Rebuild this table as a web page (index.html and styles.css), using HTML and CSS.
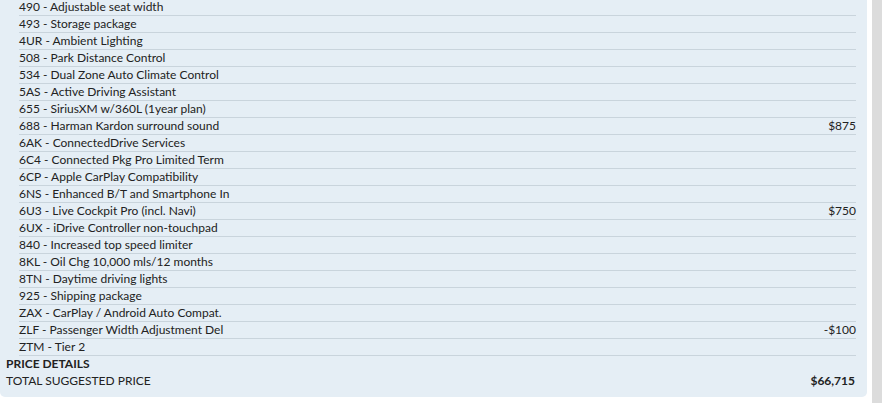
FILE: index.html
```html
<!DOCTYPE html>
<html lang="en">
<head>
    <meta charset="UTF-8">
    <title>Price details</title>
    <link rel="stylesheet" href="styles.css">
</head>
<body>

<div class="page">
    <div class="panel">
        <ul class="options">
            <li><span>490 - Adjustable seat width</span><span></span></li>
            <li><span>493 - Storage package</span><span></span></li>
            <li><span>4UR - Ambient Lighting</span><span></span></li>
            <li><span>508 - Park Distance Control</span><span></span></li>
            <li><span>534 - Dual Zone Auto Climate Control</span><span></span></li>
            <li><span>5AS - Active Driving Assistant</span><span></span></li>
            <li><span>655 - SiriusXM w/360L (1year plan)</span><span></span></li>
            <li><span>688 - Harman Kardon surround sound</span><span>$875</span></li>
            <li><span>6AK - ConnectedDrive Services</span><span></span></li>
            <li><span>6C4 - Connected Pkg Pro Limited Term</span><span></span></li>
            <li><span>6CP - Apple CarPlay Compatibility</span><span></span></li>
            <li><span>6NS - Enhanced B/T and Smartphone In</span><span></span></li>
            <li><span>6U3 - Live Cockpit Pro (incl. Navi)</span><span>$750</span></li>
            <li><span>6UX - iDrive Controller non-touchpad</span><span></span></li>
            <li><span>840 - Increased top speed limiter</span><span></span></li>
            <li><span>8KL - Oil Chg 10,000 mls/12 months</span><span></span></li>
            <li><span>8TN - Daytime driving lights</span><span></span></li>
            <li><span>925 - Shipping package</span><span></span></li>
            <li><span>ZAX - CarPlay / Android Auto Compat.</span><span></span></li>
            <li><span>ZLF - Passenger Width Adjustment Del</span><span>-$100</span></li>
            <li><span>ZTM - Tier 2</span><span></span></li>
        </ul>
        <div class="details-title">PRICE DETAILS</div>
        <div class="total">
            <span>TOTAL SUGGESTED PRICE</span>
            <span class="total-price">$66,715</span>
        </div>
    </div>
    <div class="scrollbar"></div>
</div>

</body>
</html>
```

FILE: styles.css
```css
body {
    margin: 0;
    font-family: Lato, "Liberation Sans", sans-serif;
    font-size: 12px;
    color: #222;
    background-color: #fff;
}
.page {
    display: flex;
    height: 403px;
    overflow: hidden;
}
.panel {
    width: 867px;
    height: 398px;
    margin-top: -1px;
    background-color: #e5eef5;
    border-radius: 0 0 5px 5px;
}
.scrollbar {
    width: 10px;
    margin-left: 5px;
    background-color: #dcdcdc;
}
.options {
    list-style: none;
    margin: 0;
    padding: 0 11px 0 19px;
}
.options li {
    display: flex;
    justify-content: space-between;
    height: 16px;
    line-height: 16px;
    border-bottom: 1px solid #c9d4dc;
}
.details-title {
    padding: 0 6px;
    line-height: 16px;
    font-weight: bold;
}
.total {
    display: flex;
    justify-content: space-between;
    padding: 0 12px 0 6px;
    line-height: 17px;
}
.total-price {
    font-weight: bold;
}
```
